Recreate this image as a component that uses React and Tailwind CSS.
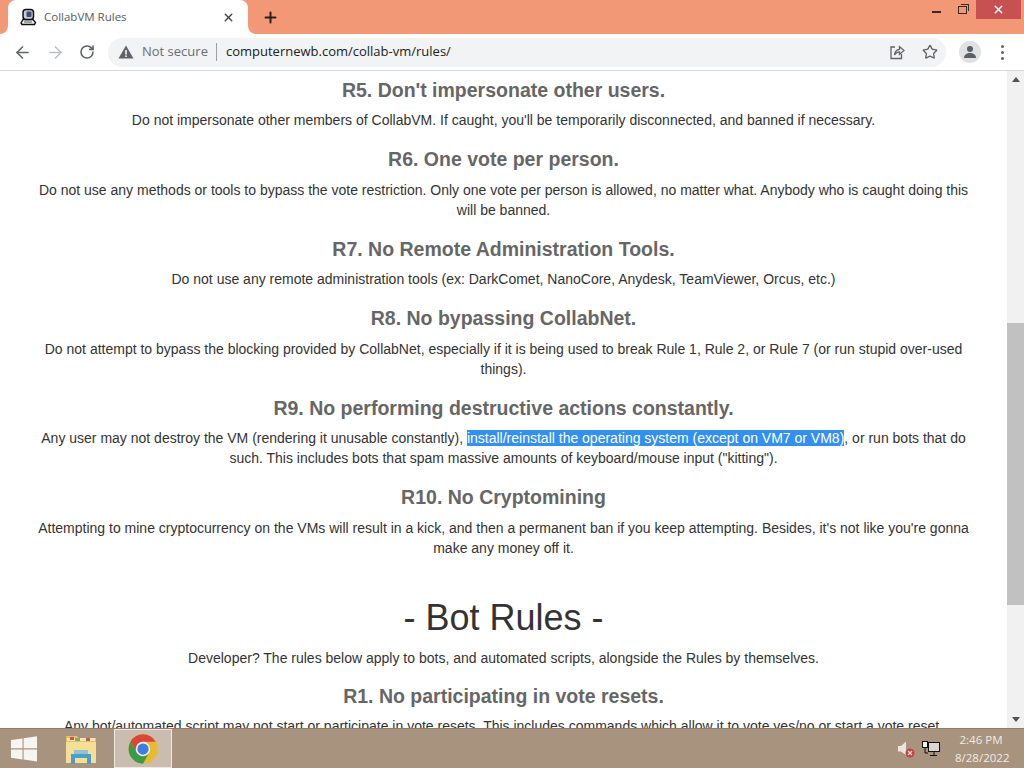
import React from 'react';
import { ArrowLeft, ArrowRight, RotateCw, X, Plus, Star } from 'lucide-react';

const uiFont = { fontFamily: '"Open Sans", "Noto Sans", sans-serif' };

const CollabIcon = () => (
  <svg width="18" height="18" viewBox="0 0 18 18">
    <path d="M2 15 L4 11.5 H14 L16.5 14.5 L15.5 16.5 H3 Z" fill="#f2f2f2" stroke="#111" strokeWidth="1.4" />
    <rect x="4" y="1.5" width="10.5" height="10" rx="3" fill="#c9cbd6" stroke="#111" strokeWidth="1.5" />
    <rect x="7.5" y="3.5" width="5" height="5.5" rx="1" fill="#3d4c7c" />
    <rect x="5" y="13.5" width="8" height="1" fill="#555555" />
  </svg>
);

const WarnIcon = () => (
  <svg width="16" height="16" viewBox="0 0 16 16">
    <path d="M8 1.5 L15.5 14.5 H0.5 Z" fill="#5f6368" />
    <rect x="7.2" y="6" width="1.6" height="4.6" fill="#f1f3f4" />
    <rect x="7.2" y="11.4" width="1.6" height="1.6" fill="#f1f3f4" />
  </svg>
);

const ShareIcon = () => (
  <svg width="16" height="16" viewBox="0 0 16 16" fill="none" stroke="#5f6368" strokeWidth="1.3">
    <path d="M6 3 H2 V14.5 H12.5 V10" />
    <path d="M5.5 11 C6 7.5 8 5.6 10.5 5.4 V2.6 L15 6.6 L10.5 10.4 V7.8 C8.5 7.8 6.8 8.8 5.5 11 Z" />
  </svg>
);

const ProfileIcon = () => (
  <div className="w-[22px] h-[22px] rounded-full bg-[#dfe1e5] flex items-center justify-center">
    <svg width="14" height="14" viewBox="0 0 14 14" fill="#5a5e66">
      <circle cx="7" cy="4" r="3" />
      <path d="M1 13 C1 9.5 4 8 7 8 C10 8 13 9.5 13 13 Z" />
    </svg>
  </div>
);

const MoreIcon = () => (
  <div className="flex flex-col gap-[3px]">
    <div className="w-[3px] h-[3px] rounded-full bg-[#5f6368]" />
    <div className="w-[3px] h-[3px] rounded-full bg-[#5f6368]" />
    <div className="w-[3px] h-[3px] rounded-full bg-[#5f6368]" />
  </div>
);

const WindowsLogo = () => (
  <svg width="28" height="28" viewBox="0 0 28 28" fill="#f7f5f2">
    <path d="M1 5 L12.5 3.4 V13.3 H1 Z" />
    <path d="M13.6 3.2 L27 1.3 V13.3 H13.6 Z" />
    <path d="M1 14.4 H12.5 V24.4 L1 22.8 Z" />
    <path d="M13.6 14.4 H27 V26.6 L13.6 24.6 Z" />
  </svg>
);

const ExplorerIcon = () => (
  <svg width="32" height="32" viewBox="0 0 32 32">
    <path d="M1 3 H12 L14 5 H31 V30 H1 Z" fill="#e3c163" />
    <rect x="2" y="5" width="28" height="3" fill="#efe6c0" />
    <rect x="5" y="4" width="4" height="3" fill="#c9564a" />
    <rect x="10" y="5" width="5" height="3" fill="#7fb069" />
    <rect x="21" y="5" width="4" height="3" fill="#c9564a" />
    <rect x="1" y="9" width="30" height="21" fill="#f3df96" />
    <path d="M6 21 H26 V31 H22 V25 H10 V31 H6 Z" fill="#4a9fc9" />
    <rect x="9" y="17" width="14" height="4" fill="#8ac6d8" />
  </svg>
);

const ChromeIcon = () => (
  <svg width="30" height="30" viewBox="0 0 48 48">
    <circle cx="24" cy="24" r="23.5" fill="#e9b92f" />
    <path d="M24 .5 A23.5 23.5 0 0 1 44.3 12.5 H24 A11.5 11.5 0 0 0 14 29.75 L3.9 12.5 A23.5 23.5 0 0 1 24 .5 Z" fill="#d9473b" />
    <path d="M3.9 12.5 L14 29.75 A11.5 11.5 0 0 0 34 29.75 L24 47.5 A23.5 23.5 0 0 1 3.9 12.5 Z" fill="#3a9b4c" />
    <circle cx="24" cy="24" r="11.5" fill="#f3efe9" />
    <circle cx="24" cy="24" r="9" fill="#3f7de0" />
  </svg>
);

const SoundIcon = () => (
  <svg width="20" height="20" viewBox="0 0 20 20">
    <path d="M1 7 H4 L9 2.5 V16 L4 12.5 H1 Z" fill="#e8e4df" />
    <circle cx="13" cy="14" r="4.5" fill="#cf3c3c" />
    <path d="M11 12 L15 16 M15 12 L11 16" stroke="#f5dede" strokeWidth="1.4" />
  </svg>
);

const NetworkIcon = () => (
  <svg width="18" height="18" viewBox="0 0 18 18" fill="none" stroke="#111" strokeWidth="1">
    <rect x="6.5" y="2.5" width="11" height="9" fill="#ddd6cf" />
    <rect x="0.5" y="1.5" width="5" height="6" fill="#f5f2ee" />
    <path d="M3 8 V13 H6 M12 12 V15 M8 15.5 H15" />
  </svg>
);

const Rule = ({ title, children }) => (
  <section className="mb-[18px]">
    <h2 className="text-[19.5px] leading-[23px] font-bold text-[#666666] mb-[8.5px]">{title}</h2>
    <p className="text-[14px] leading-[20px] text-[#333333]">{children}</p>
  </section>
);

const Scrollbar = () => (
  <div className="w-[17px] bg-[#f1f1f1] flex flex-col items-center justify-between shrink-0">
    <div className="h-[17px] w-full flex items-center justify-center">
      <div className="w-0 h-0 border-x-[4px] border-x-transparent border-b-[5px] border-b-[#505050]" />
    </div>
    <div className="w-full flex-1 pt-[235px] pb-[106px]">
      <div className="w-full h-full bg-[#c1c1c1]" />
    </div>
    <div className="h-[17px] w-full flex items-center justify-center">
      <div className="w-0 h-0 border-x-[4px] border-x-transparent border-t-[5px] border-t-[#505050]" />
    </div>
  </div>
);

export default function App() {
  return (
    <div className="w-[1024px] h-[768px] flex flex-col overflow-hidden bg-white">
      {/* window title bar + tab strip */}
      <div className="h-[34px] bg-[#f29877] flex shrink-0" style={uiFont}>
        <div className="relative ml-[8px] w-[240px] h-[34px] bg-white rounded-t-[8px] flex items-center pl-[11px] pr-[13px]">
          <div className="absolute -left-[8px] bottom-0 w-[8px] h-[8px] bg-white">
            <div className="w-full h-full bg-[#f29877] rounded-br-[8px]" />
          </div>
          <div className="absolute -right-[8px] bottom-0 w-[8px] h-[8px] bg-white">
            <div className="w-full h-full bg-[#f29877] rounded-bl-[8px]" />
          </div>
          <CollabIcon />
          <span className="ml-[7px] text-[11.5px] text-[#5a5a5a] flex-1">CollabVM Rules</span>
          <X size={13} strokeWidth={2.5} className="text-[#444444]" />
        </div>
        <div className="ml-[14px] h-[34px] flex items-center">
          <Plus size={17} strokeWidth={2.8} className="text-[#222222]" />
        </div>
        <div className="ml-auto flex items-start">
          <div className="w-[9px] h-[2px] bg-[#3a2a24] mt-[11px] mr-[17px]" />
          <div className="mt-[6px] mr-[9px] w-[9px] h-[8px] border border-[#3a2a24] relative">
            <div className="absolute -top-[3px] -right-[3px] w-[8px] h-[7px] border border-[#3a2a24] border-b-0 border-l-0" />
          </div>
          <div className="w-[45px] h-[19px] bg-[#c75050] flex items-center justify-center mr-[3px]">
            <X size={13} strokeWidth={2.5} className="text-white" />
          </div>
        </div>
      </div>

      {/* toolbar */}
      <div className="h-[37px] bg-white border-b border-[#d9d9d9] flex items-center shrink-0" style={uiFont}>
        <div className="w-[108px] flex items-center pl-[13px] gap-[14px] shrink-0">
          <ArrowLeft size={19} strokeWidth={2} className="text-[#5f6368]" />
          <ArrowRight size={19} strokeWidth={2} className="text-[#bcc0c4]" />
          <RotateCw size={16} strokeWidth={2.4} className="text-[#5f6368]" />
        </div>
        <div className="w-[838px] h-[29px] rounded-full bg-[#f1f3f4] flex items-center pl-[10px] pr-[8px]">
          <WarnIcon />
          <span className="ml-[8px] text-[13px] text-[#6a6e73]">Not secure</span>
          <div className="w-px h-[18px] bg-[#9aa0a6] mx-[8px]" />
          <span className="ml-px text-[13px] text-[#202124]">computernewb.com/collab-vm/rules/</span>
          <div className="ml-auto flex items-center gap-[17px]">
            <ShareIcon />
            <Star size={16} strokeWidth={2} className="text-[#5f6368]" />
          </div>
        </div>
        <div className="ml-[13px]"><ProfileIcon /></div>
        <div className="ml-[20px]"><MoreIcon /></div>
      </div>

      {/* page */}
      <div className="flex-1 flex min-h-0">
        <main
          className="flex-1 overflow-hidden text-center pt-[7.5px] px-[36px]"
          style={{ fontFamily: '"Liberation Sans", Arial, sans-serif' }}
        >
          <Rule title="R5. Don't impersonate other users.">
            Do not impersonate other members of CollabVM. If caught, you'll be temporarily disconnected, and banned if necessary.
          </Rule>
          <Rule title="R6. One vote per person.">
            Do not use any methods or tools to bypass the vote restriction. Only one vote per person is allowed, no matter what. Anybody who is caught doing this will be banned.
          </Rule>
          <Rule title="R7. No Remote Administration Tools.">
            Do not use any remote administration tools (ex: DarkComet, NanoCore, Anydesk, TeamViewer, Orcus, etc.)
          </Rule>
          <Rule title="R8. No bypassing CollabNet.">
            Do not attempt to bypass the blocking provided by CollabNet, especially if it is being used to break Rule 1, Rule 2, or Rule 7 (or run stupid over-used things).
          </Rule>
          <Rule title="R9. No performing destructive actions constantly.">
            Any user may not destroy the VM (rendering it unusable constantly),{' '}
            <span className="bg-[#3390f0] text-white">install/reinstall the operating system (except on VM7 or VM8)</span>
            , or run bots that do such. This includes bots that spam massive amounts of keyboard/mouse input ("kitting").
          </Rule>
          <Rule title="R10. No Cryptomining">
            Attempting to mine cryptocurrency on the VMs will result in a kick, and then a permanent ban if you keep attempting. Besides, it's not like you're gonna make any money off it.
          </Rule>
          <h1 className="text-[36px] leading-[42px] text-[#333333] mt-[39px] mb-[9px]">- Bot Rules -</h1>
          <p className="text-[14px] leading-[20px] text-[#333333] mb-[17px]">
            Developer? The rules below apply to bots, and automated scripts, alongside the Rules by themselves.
          </p>
          <Rule title="R1. No participating in vote resets.">
            Any bot/automated script may not start or participate in vote resets. This includes commands which allow it to vote yes/no or start a vote reset.
          </Rule>
        </main>
        <Scrollbar />
      </div>

      {/* windows taskbar */}
      <div className="h-[40px] bg-[#a8937e] flex items-center shrink-0 border-t border-[#8f7d6c]" style={uiFont}>
        <div className="ml-[10px] w-[28px] h-[28px]"><WindowsLogo /></div>
        <div className="ml-[27px] w-[32px] h-[32px]"><ExplorerIcon /></div>
        <div className="ml-[17px] w-[58px] h-[39px] bg-[#cabdb0] border border-[#efe9e2] flex items-center justify-center">
          <ChromeIcon />
        </div>
        <div className="ml-auto flex items-center">
          <SoundIcon />
          <div className="ml-[5px]"><NetworkIcon /></div>
          <div className="ml-[15px] mr-[17px] w-[52px] text-center text-[11.5px] leading-[18px] text-[#f1ebe4]">
            <div>2:46 PM</div>
            <div>8/28/2022</div>
          </div>
        </div>
      </div>
    </div>
  );
}
